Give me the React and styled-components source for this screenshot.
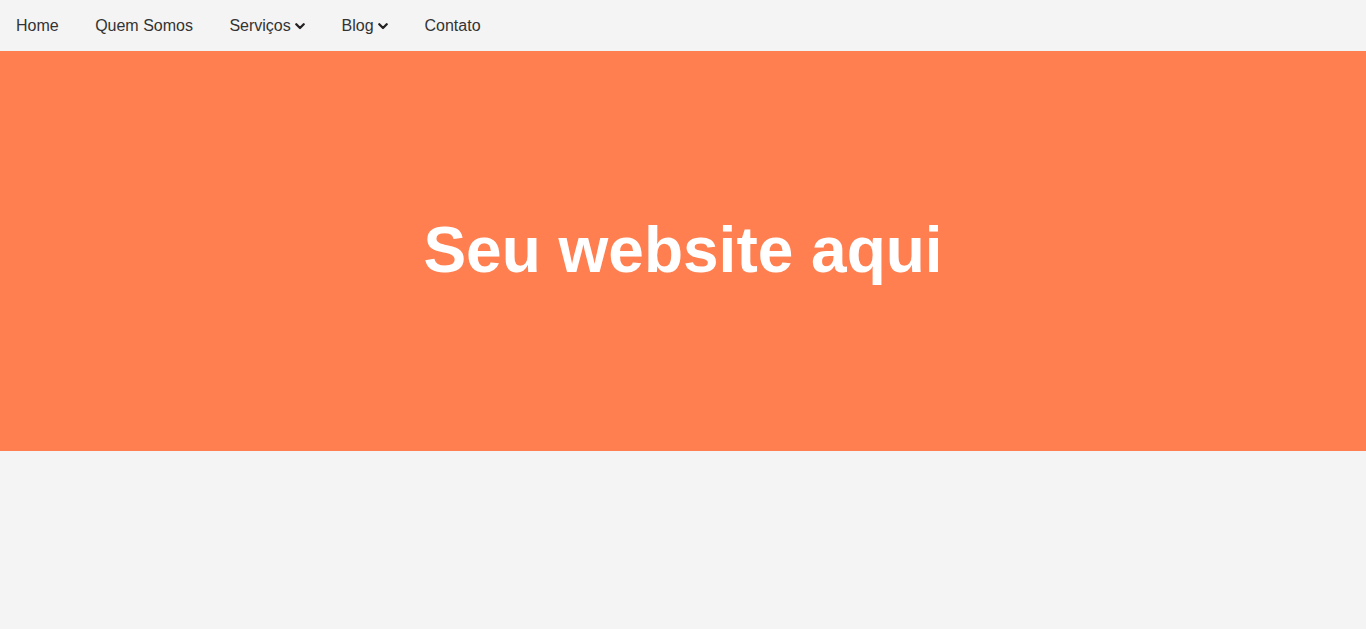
import React from "react";
import styled, { createGlobalStyle } from "styled-components";

const Global = createGlobalStyle`
  html, body { margin: 0; padding: 0; }
  body {
    background: #f4f4f4;
    font-family: "Liberation Sans", Arial, sans-serif;
    color: #333;
  }
`;

const NavBar = styled.nav`
  height: 51px;
  background: #f4f4f4;
`;

const NavList = styled.ul`
  list-style: none;
  margin: 0;
  padding: 0;
  height: 100%;
  display: flex;
  align-items: center;
  gap: 4.45px;
`;

const NavItem = styled.li`
  padding: 0 16px;
  font-size: 16px;
  line-height: 18px;
  color: #333;
  display: flex;
  align-items: center;
  white-space: pre;
`;

const Chevron = styled.svg`
  width: 10px;
  height: 7px;
  display: block;
  margin-top: 1px;
`;

const Hero = styled.header`
  height: 400px;
  background: #ff7f50;
  display: flex;
  align-items: center;
  justify-content: center;
`;

const Title = styled.h1`
  margin: 0;
  color: #fff;
  font-size: 64px;
  font-weight: bold;
  line-height: 1.15;
`;

const ChevronDown = () => (
  <Chevron viewBox="0 0 10 7">
    <polyline
      points="1.3,1.3 5,5 8.7,1.3"
      fill="none"
      stroke="#222"
      strokeWidth="2.3"
      strokeLinecap="round"
      strokeLinejoin="round"
    />
  </Chevron>
);

export default function App() {
  return (
    <>
      <Global />
      <NavBar>
        <NavList>
          <NavItem>Home</NavItem>
          <NavItem>Quem Somos</NavItem>
          <NavItem>
            {"Serviços "}
            <ChevronDown />
          </NavItem>
          <NavItem>
            {"Blog "}
            <ChevronDown />
          </NavItem>
          <NavItem>Contato</NavItem>
        </NavList>
      </NavBar>
      <Hero>
        <Title>Seu website aqui</Title>
      </Hero>
    </>
  );
}
